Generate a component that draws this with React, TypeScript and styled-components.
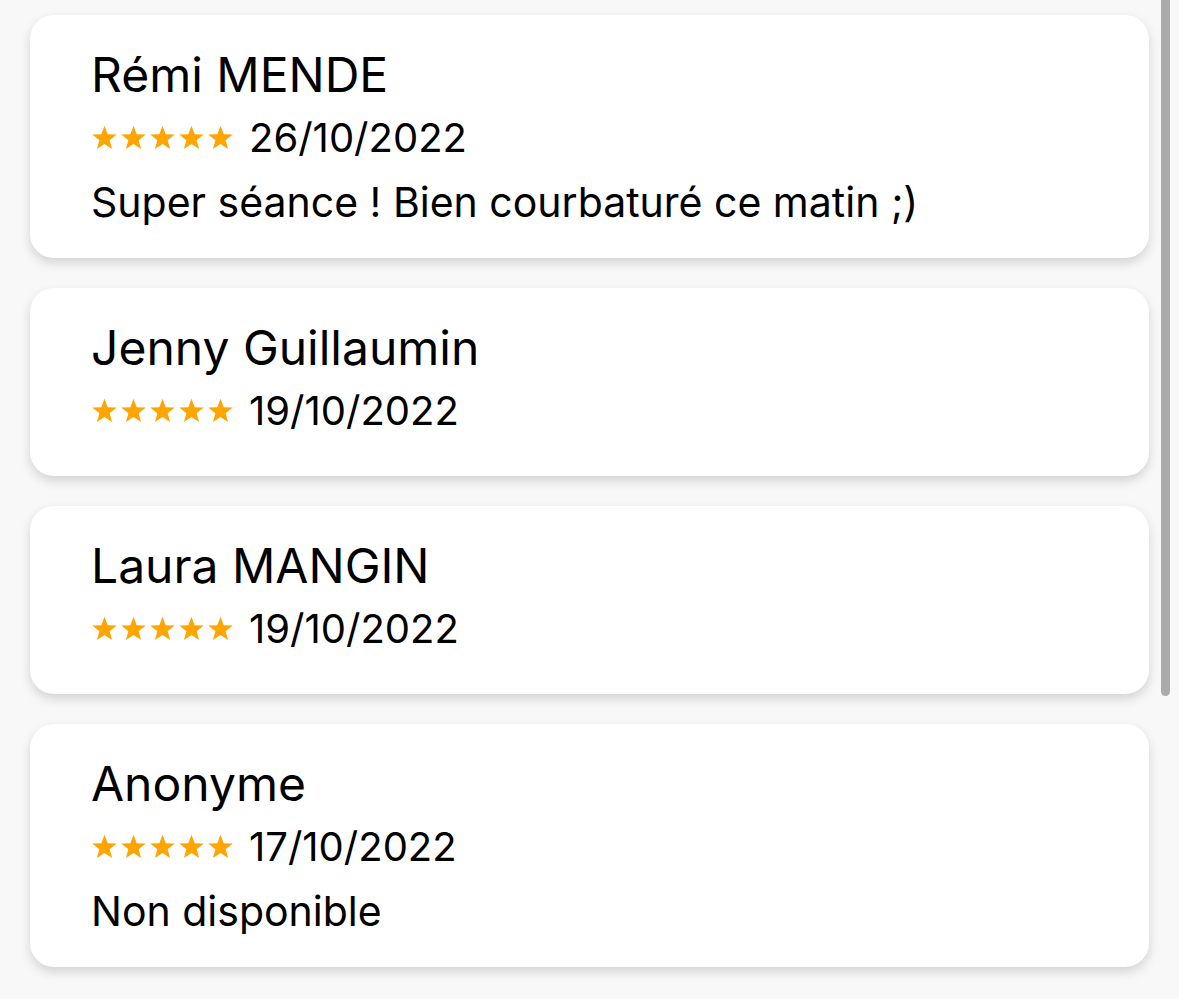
import React from "react";
import styled, { createGlobalStyle } from "styled-components";

const GlobalStyle = createGlobalStyle`
  html, body {
    margin: 0;
    padding: 0;
    background: #f8f8f8;
    font-family: Inter, "Noto Sans", "Liberation Sans", sans-serif;
    color: #000;
  }
`;

const Screen = styled.div`
  position: relative;
  width: 1179px;
  height: 999px;
  overflow: hidden;
  box-sizing: border-box;
  padding: 15px 30px 0 30px;
`;

const List = styled.div`
  display: flex;
  flex-direction: column;
  gap: 30px;
`;

const Card = styled.div`
  background: #fff;
  border-radius: 24px;
  box-shadow: 0 5px 11px rgba(0, 0, 0, 0.15);
  padding: 30px 61px 35px 61px;
  display: flex;
  flex-direction: column;
`;

const Name = styled.div`
  font-size: 48px;
  line-height: 60px;
  height: 60px;
  white-space: nowrap;
`;

const DateRow = styled.div`
  display: flex;
  align-items: center;
  gap: 15px;
  margin-top: 3px;
  height: 60px;
`;

const Stars = styled.div`
  display: flex;
  gap: 2px;
`;

const DateText = styled.span`
  font-size: 40px;
  line-height: 60px;
`;

const Comment = styled.div`
  font-size: 41px;
  line-height: 60px;
  margin-top: 4px;
  margin-bottom: -9px;
  white-space: nowrap;
`;

const ScrollThumb = styled.div`
  position: absolute;
  top: 0;
  left: 1161px;
  width: 9px;
  height: 696px;
  background: #aaaaaa;
  border-radius: 0 0 5px 5px;
`;

const Star: React.FC = () => (
  <svg width="27" height="26" viewBox="0 0 24 23">
    <path
      d="M12 0.5l2.82 7.6 8.1.33-6.36 5.02 2.2 7.8L12 16.77l-6.76 4.48 2.2-7.8L1.08 8.43l8.1-.33z"
      fill="#FFA500"
    />
  </svg>
);

interface IReview {
  id: number;
  name: string;
  date: string;
  comment?: string;
}

const reviews: IReview[] = [
  { id: 1, name: "Rémi MENDE", date: "26/10/2022", comment: "Super séance ! Bien courbaturé ce matin ;)" },
  { id: 2, name: "Jenny Guillaumin", date: "19/10/2022" },
  { id: 3, name: "Laura MANGIN", date: "19/10/2022" },
  { id: 4, name: "Anonyme", date: "17/10/2022", comment: "Non disponible" },
];

const ReviewCard: React.FC<{ data: IReview }> = ({ data }) => (
  <Card>
    <Name>{data.name}</Name>
    <DateRow>
      <Stars>
        {[0, 1, 2, 3, 4].map(i => (
          <Star key={i} />
        ))}
      </Stars>
      <DateText>{data.date}</DateText>
    </DateRow>
    {data.comment && <Comment>{data.comment}</Comment>}
  </Card>
);

const App: React.FC = () => {
  return (
    <Screen>
      <GlobalStyle />
      <List>
        {reviews.map(r => (
          <ReviewCard key={r.id} data={r} />
        ))}
      </List>
      <ScrollThumb />
    </Screen>
  );
};

export default App;
